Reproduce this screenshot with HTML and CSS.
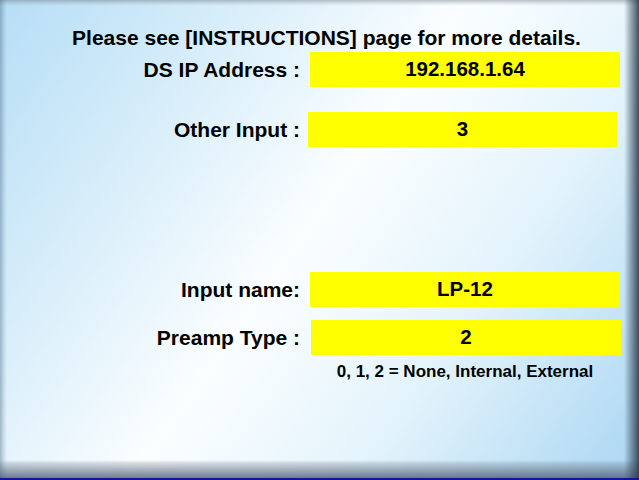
FILE: index.html
```html
<!DOCTYPE html>
<html>
<head>
<meta charset="utf-8">
<link rel="stylesheet" href="styles.css">
</head>
<body>
<div class="screen">
  <div class="panel">
    <p class="heading">Please see [INSTRUCTIONS] page for more details.</p>
    <div class="form">
      <div class="row r1"><span class="label">DS IP Address :</span><span class="value">192.168.1.64</span></div>
      <div class="row r2"><span class="label">Other Input :</span><span class="value">3</span></div>
      <div class="row r3"><span class="label">Input name:</span><span class="value">LP-12</span></div>
      <div class="row r4"><span class="label">Preamp Type :</span><span class="value">2</span></div>
      <div class="row r5"><span class="label"></span><span class="note">0, 1, 2 = None, Internal, External</span></div>
    </div>
  </div>
</div>
</body>
</html>
```

FILE: styles.css
```css
html, body {
  margin: 0;
  padding: 0;
}
body {
  width: 639px;
  height: 480px;
  overflow: hidden;
  font-family: "Liberation Sans", Arial, sans-serif;
  font-weight: bold;
  color: #000;
}
.screen {
  width: 639px;
  height: 478px;
  border-bottom: 2px solid #1414a0;
  overflow: hidden;
  background:
    linear-gradient(90deg, rgba(60, 80, 100, 0) 624px, rgba(60, 80, 100, 0.35) 629px, rgba(45, 62, 80, 0.9) 639px),
    linear-gradient(180deg, rgba(90, 105, 125, 0) 460px, rgba(110, 120, 140, 0.25) 463px, rgba(80, 95, 115, 0.8) 478px),
    linear-gradient(90deg, rgba(80, 110, 140, 0.45) 0px, rgba(80, 110, 140, 0.15) 4px, rgba(80, 110, 140, 0) 7px),
    linear-gradient(180deg, rgba(110, 120, 130, 0.45) 0px, rgba(110, 120, 130, 0.1) 4px, rgba(110, 120, 130, 0) 6px),
    linear-gradient(125deg, #b6def6 0%, #d8eefa 25%, #fbfeff 48%, #e4f4fc 70%, #aad6f2 100%);
}
.panel {
  margin: 0 0 0 6px;
  width: 619px;
  padding-top: 26px;
}
.heading {
  margin: 0 0 0 65px;
  width: 511px;
  text-align: center;
  font-size: 21px;
  line-height: 24px;
  white-space: nowrap;
}
.form {
  display: flex;
  flex-direction: column;
  margin-top: 2px;
}
.row {
  display: grid;
  grid-template-columns: 294px 310px;
  column-gap: 10px;
  align-items: center;
}
.label {
  text-align: right;
  font-size: 21px;
  white-space: nowrap;
}
.value {
  display: block;
  height: 35px;
  line-height: 33px;
  background: #ffff00;
  text-align: center;
  font-size: 20.5px;
}
.r2 { margin-top: 25px; }
.r2 .value { margin-left: -2px; margin-right: 3px; }
.r3 { margin-top: 125px; }
.r4 { margin-top: 13px; }
.r4 .value { margin-left: 1px; margin-right: -1px; }
.r5 { margin-top: 3px; }
.note {
  text-align: center;
  font-size: 17px;
  line-height: 28px;
}
```
